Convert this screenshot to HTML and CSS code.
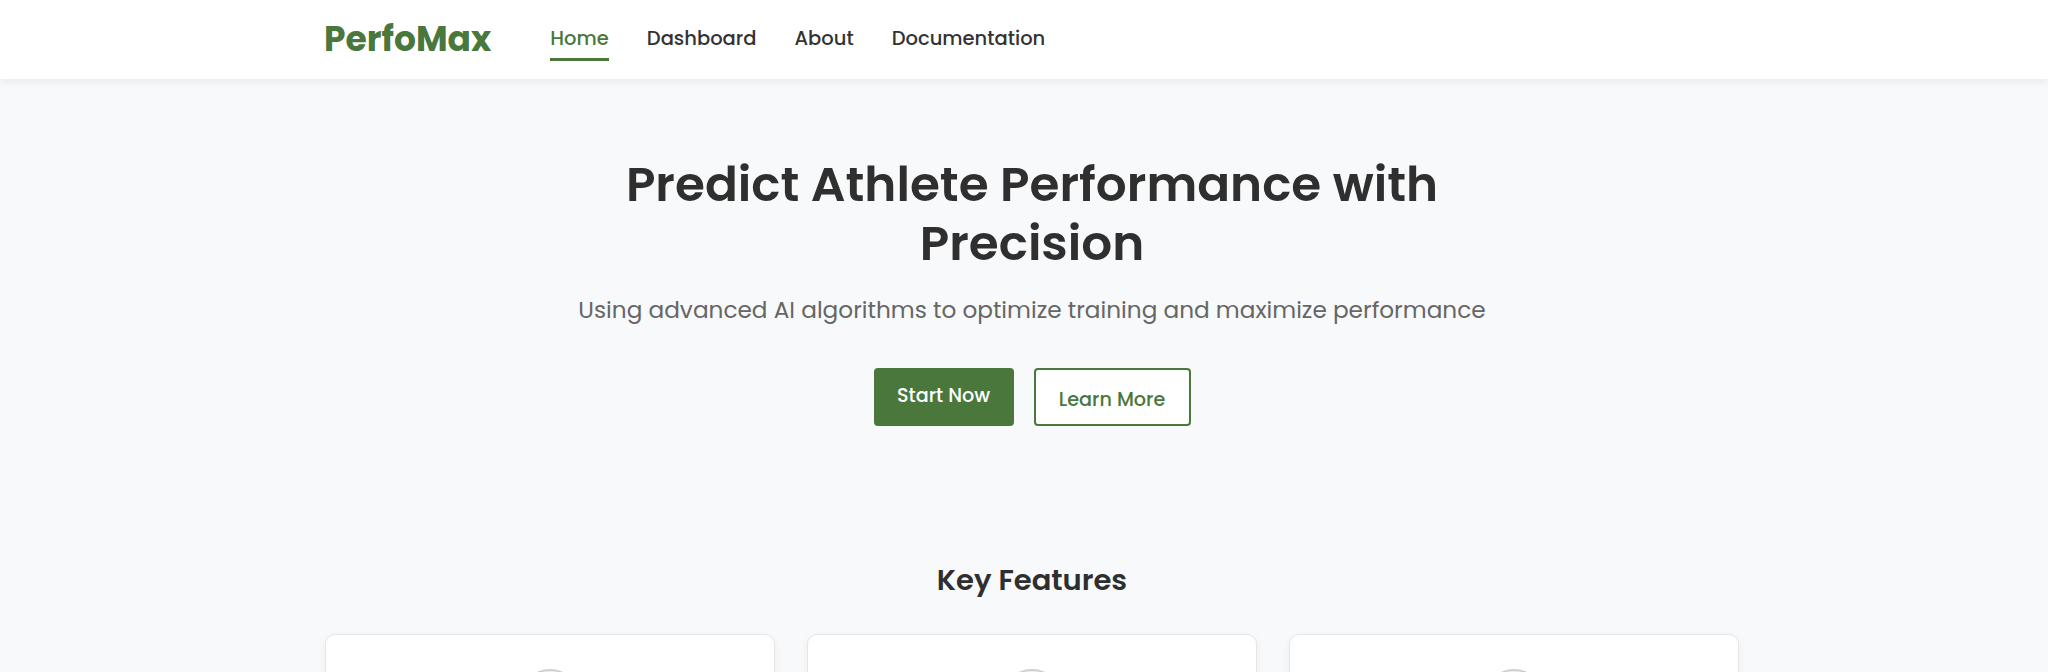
FILE: index.html
```html
<!DOCTYPE html>
<html lang="en">
<head>
<meta charset="utf-8">
<title>PerfoMax</title>
<link rel="stylesheet" href="styles.css">
</head>
<body>
<header class="site-header">
  <div class="container header-inner">
    <a class="logo" href="#">PerfoMax</a>
    <nav class="nav">
      <a class="nav-link active" href="#">Home</a>
      <a class="nav-link" href="#">Dashboard</a>
      <a class="nav-link" href="#">About</a>
      <a class="nav-link" href="#">Documentation</a>
    </nav>
  </div>
</header>
<main>
  <section class="hero">
    <h1 class="hero-title">Predict Athlete Performance with<br>Precision</h1>
    <p class="hero-sub">Using advanced AI algorithms to optimize training and maximize performance</p>
    <div class="hero-actions">
      <a class="btn btn-primary" href="#">Start Now</a>
      <a class="btn btn-outline" href="#">Learn More</a>
    </div>
  </section>
  <section class="features">
    <h2 class="features-title">Key Features</h2>
    <div class="container feature-grid">
      <div class="card">
        <div class="card-icon"></div>
        <h3 class="card-title">Performance Prediction</h3>
        <p class="card-text">Forecast athlete results using historical data.</p>
      </div>
      <div class="card">
        <div class="card-icon"></div>
        <h3 class="card-title">Training Optimization</h3>
        <p class="card-text">Personalized plans to maximize progress.</p>
      </div>
      <div class="card">
        <div class="card-icon"></div>
        <h3 class="card-title">Injury Prevention</h3>
        <p class="card-text">Detect risk factors before they become problems.</p>
      </div>
    </div>
  </section>
</main>
</body>
</html>
```

FILE: styles.css
```css
* { box-sizing: border-box; }

body {
  margin: 0;
  background: #f8f9fa;
  color: #333333;
  font-family: "Poppins", "Inter", "Noto Sans", sans-serif;
}

a { text-decoration: none; }

.container {
  width: 1414px;
  margin-left: calc(50% - 699px);
}

.site-header {
  background: #ffffff;
  box-shadow: 0 2px 10px rgba(0, 0, 0, 0.08);
  height: 79px;
}

.header-inner {
  display: flex;
  align-items: center;
  height: 79px;
}

.logo {
  font-size: 34.5px;
  font-weight: 700;
  color: #4a773c;
  line-height: 40px;
  margin-left: -1px;
  margin-top: -2px;
}

.nav {
  display: flex;
  gap: 38px;
  margin-left: 59px;
  margin-top: 6px;
}

.nav-link {
  font-size: 19.5px;
  font-weight: 500;
  color: #333333;
  line-height: 28px;
  padding-bottom: 5px;
  border-bottom: 3px solid transparent;
}

.nav-link.active {
  color: #4a773c;
  border-bottom-color: #4a773c;
}

.hero {
  text-align: center;
  padding-top: 76px;
  padding-left: 16px;
}

.hero-title {
  margin: 0;
  font-size: 48.5px;
  line-height: 59px;
  font-weight: 600;
  color: #2f2f2f;
}

.hero-sub {
  margin: 21px 0 0;
  font-size: 23.2px;
  line-height: 33px;
  color: #666666;
}

.hero-actions {
  display: flex;
  justify-content: center;
  gap: 20px;
  margin-top: 41px;
}

.btn {
  display: flex;
  align-items: center;
  justify-content: center;
  height: 58px;
  border-radius: 4px;
  font-size: 19.2px;
  font-weight: 500;
}

.btn-primary {
  width: 140px;
  background: #4a773c;
  color: #ffffff;
  padding-bottom: 4px;
}

.btn-outline {
  width: 157px;
  border: 2px solid #4a773c;
  color: #4a773c;
  background: #ffffff;
  padding-top: 4px;
}

.features {
  padding-top: 134px;
}

.features-title {
  margin: 0 0 34px;
  padding-left: 16px;
  text-align: center;
  font-size: 29px;
  line-height: 40px;
  font-weight: 600;
  color: #2f2f2f;
}

.feature-grid {
  display: grid;
  grid-template-columns: repeat(3, 450px);
  gap: 32px;
}

.card {
  background: #ffffff;
  border: 1px solid #e6e6e6;
  border-radius: 10px;
  box-shadow: 0 3px 10px rgba(0, 0, 0, 0.05);
  padding: 34px 30px 30px;
  text-align: center;
}

.card-icon {
  width: 60px;
  height: 60px;
  margin: 0 auto 16px;
  border-radius: 50%;
  background: #f1f3f1;
  border-top: 2px solid #cfcfcf;
}

.card-title {
  margin: 0 0 10px;
  font-size: 20px;
  font-weight: 600;
}

.card-text {
  margin: 0;
  font-size: 16px;
  color: #666666;
}
```
